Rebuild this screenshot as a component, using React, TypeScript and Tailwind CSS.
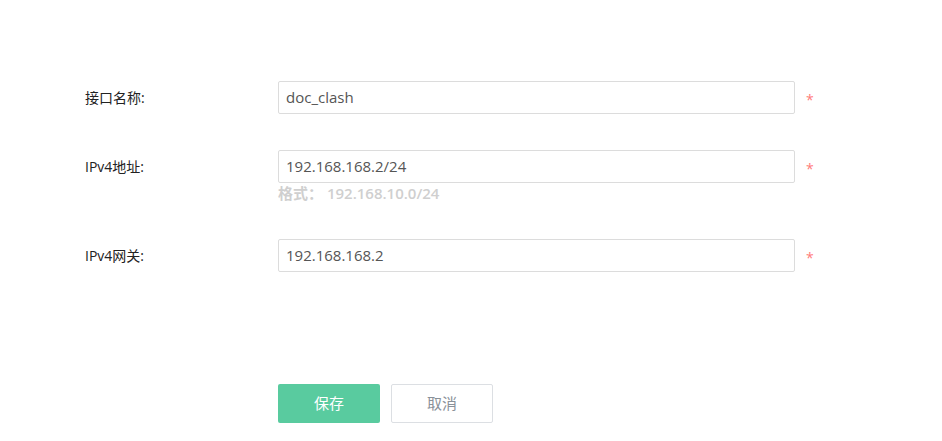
export default function App() {
  const font = { fontFamily: '"Open Sans", "Noto Sans CJK SC", sans-serif' };

  const rows = [
    { label: "接口名称:", value: "doc_clash", gap: "" },
    { label: "IPv4地址:", value: "192.168.168.2/24", hint: "格式： 192.168.10.0/24", gap: "mt-[36px]" },
    { label: "IPv4网关:", value: "192.168.168.2", gap: "mt-[36px]" },
  ];

  return (
    <div className="h-[441px] w-[942px] overflow-hidden bg-white pt-[81px]" style={font}>
      {rows.map((row) => (
        <div key={row.label} className={row.gap}>
          <div className="flex h-[33px] items-center">
            <div className="w-[278px] pl-[85px] text-[14px] text-[#222]">{row.label}</div>
            <div className="flex h-[33px] w-[517px] items-center rounded-[2px] border border-[#dcdcdc] px-[7px] text-[15px] text-[#555]">
              {row.value}
            </div>
            <span className="ml-[11px] mt-[4px] text-[14px] leading-none text-[#ff7b7b]">*</span>
          </div>
          {row.hint && (
            <div className="ml-[278px] text-[15px] font-semibold leading-[20px] text-[#cfcfcf]">
              {row.hint}
            </div>
          )}
        </div>
      ))}

      <div className="ml-[278px] mt-[112px] flex gap-[11px]">
        <button className="h-[39px] w-[102px] rounded-[2px] bg-[#59cb9f] text-[15px] text-white">
          保存
        </button>
        <button className="h-[39px] w-[102px] rounded-[2px] border border-[#dcdfe3] bg-white text-[15px] text-[#8a9199]">
          取消
        </button>
      </div>
    </div>
  );
}
